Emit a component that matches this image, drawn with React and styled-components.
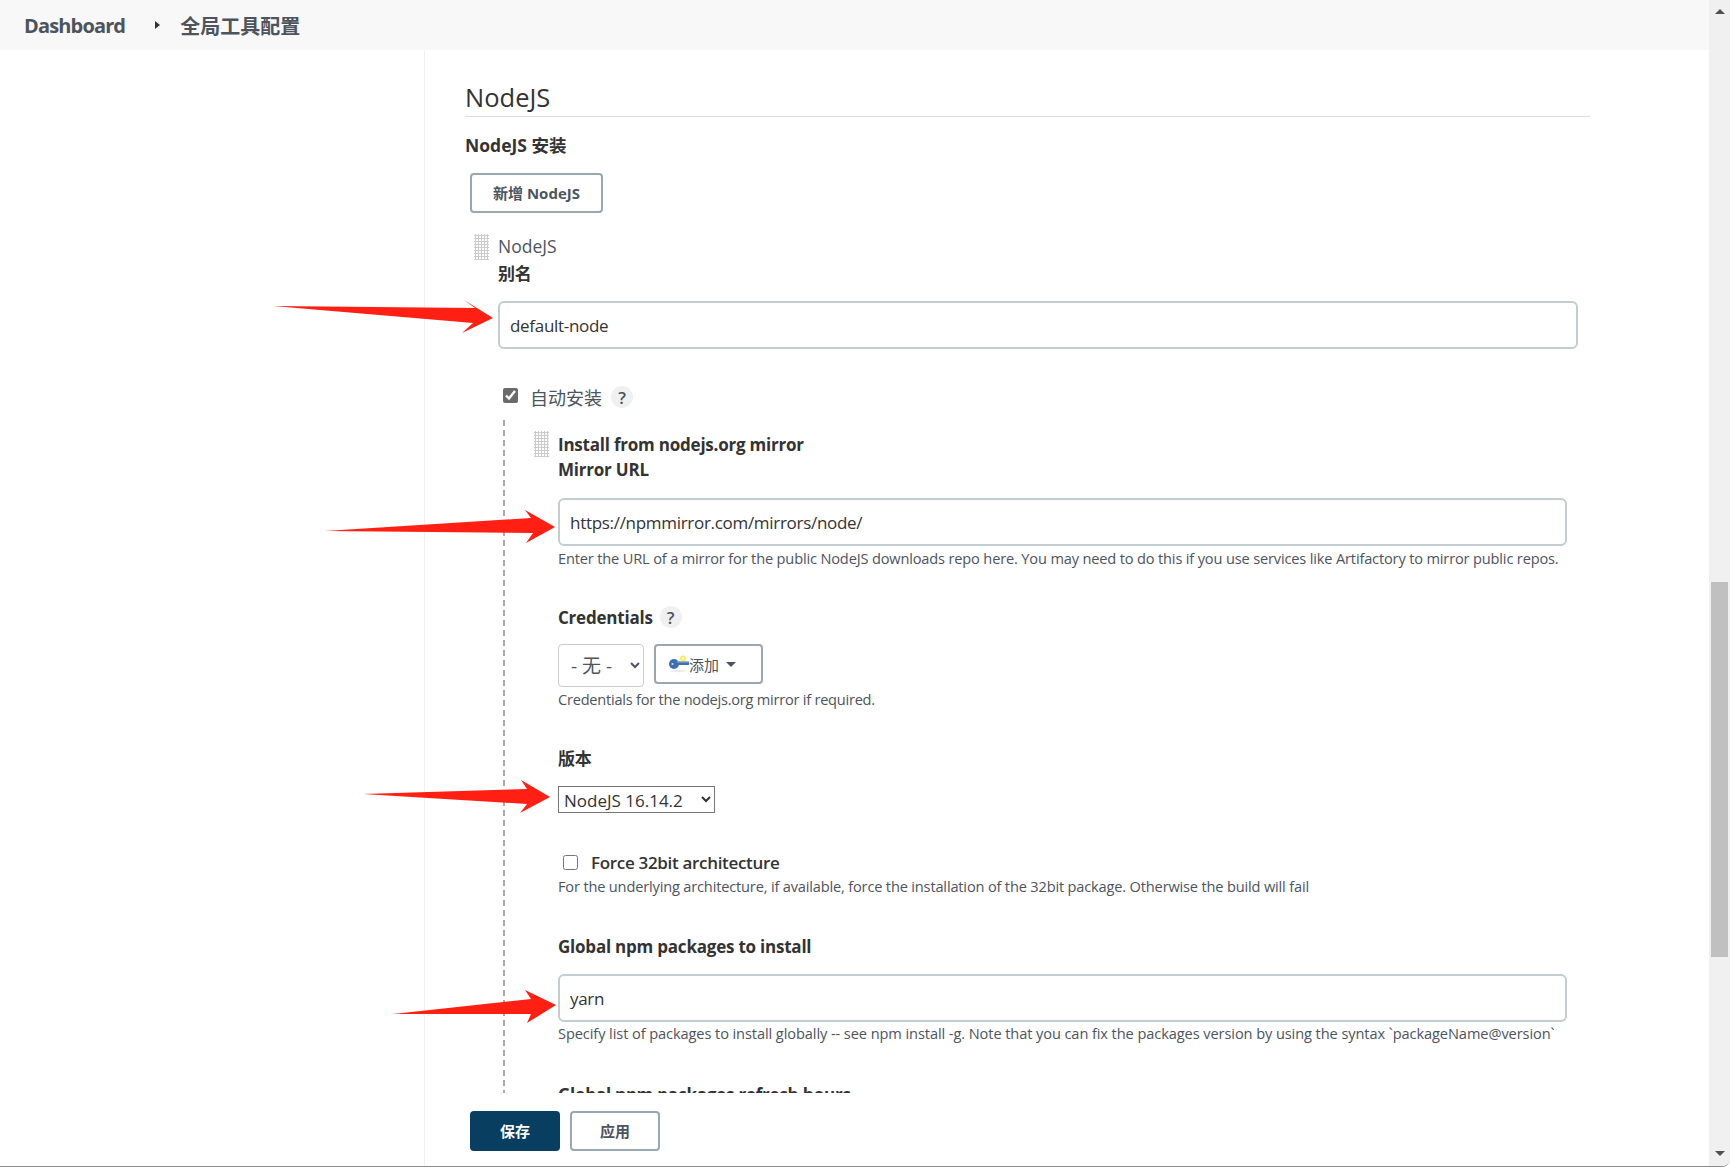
import styled, { createGlobalStyle } from "styled-components";

const GlobalStyle = createGlobalStyle`
    html, body {
        margin: 0;
        padding: 0;
        background: #fff;
    }
    body {
        font-family: "Open Sans", "Noto Sans CJK SC", sans-serif;
        color: #333;
        overflow: hidden;
    }
`

const KeyIcon = () => (
    <svg width="20" height="20" viewBox="0 0 20 20">
        <ellipse cx="9" cy="17" rx="8" ry="1.2" fill="#ececec" />
        <circle cx="14" cy="4.5" r="3" fill="#f7ee5a" />
        <circle cx="14" cy="4.5" r="1.3" fill="#fffbd0" />
        <ellipse cx="5" cy="10" rx="5" ry="5" fill="#3f6fb0" />
        <rect x="8" y="7.5" width="12" height="3.5" fill="#3f6fb0" />
        <rect x="8" y="7.5" width="12" height="1" fill="#8fb0da" />
        <circle cx="3.5" cy="10" r="1.1" fill="#c9daf0" />
    </svg>
)

const App = () => {
    return (
        <Page>
            <GlobalStyle />
            <Window>
                <Breadcrumb>
                    <Crumb $spacing={-0.85}>Dashboard</Crumb>
                    <CrumbArrow />
                    <Crumb>全局工具配置</Crumb>
                </Breadcrumb>
                <Body>
                    <Sidebar />
                    <Main>
                        <Scroller>
                            <SectionTitle>NodeJS</SectionTitle>
                            <Heading>NodeJS 安装</Heading>
                            <AddButton>新增 NodeJS</AddButton>
                            <Item>
                                <Handle />
                                <ItemBody>
                                    <ItemName>NodeJS</ItemName>
                                    <Label $top={3}>别名</Label>
                                    <TextInput $top={16} defaultValue="default-node" />
                                    <CheckRow $top={36} $left={5}>
                                        <Check type="checkbox" defaultChecked $lift={3} />
                                        <CheckText>自动安装</CheckText>
                                        <Help>?</Help>
                                    </CheckRow>
                                    <Nested>
                                        <NestedItem>
                                            <Handle />
                                            <ItemBody>
                                                <Label $top={1}>Install from nodejs.org mirror</Label>
                                                <Label $top={1}>Mirror URL</Label>
                                                <TextInput $top={17} defaultValue="https://npmmirror.com/mirrors/node/" />
                                                <Hint $top={2}>Enter the URL of a mirror for the public NodeJS downloads repo here. You may need to do this if you use services like Artifactory to mirror public repos.</Hint>

                                                <LabelRow $top={37}>
                                                    <Label>Credentials</Label>
                                                    <Help $left={7}>?</Help>
                                                </LabelRow>
                                                <CredentialRow>
                                                    <CredentialSelect defaultValue="none">
                                                        <option value="none">- 无 -</option>
                                                    </CredentialSelect>
                                                    <CredentialAdd>
                                                        <KeyIcon />
                                                        <span>添加</span>
                                                        <Caret />
                                                    </CredentialAdd>
                                                </CredentialRow>
                                                <Hint $top={2} $spacing={-0.24}>Credentials for the nodejs.org mirror if required.</Hint>

                                                <Label $top={37}>版本</Label>
                                                <VersionSelect defaultValue="16.14.2">
                                                    <option value="16.14.2">NodeJS 16.14.2</option>
                                                </VersionSelect>

                                                <CheckRow $top={37} $left={5}>
                                                    <Check type="checkbox" />
                                                    <ForceText>Force 32bit architecture</ForceText>
                                                </CheckRow>
                                                <Hint $top={2} $spacing={-0.17}>For the underlying architecture, if available, force the installation of the 32bit package. Otherwise the build will fail</Hint>

                                                <Label $top={38}>Global npm packages to install</Label>
                                                <TextInput $top={16} defaultValue="yarn" />
                                                <Hint $top={1} $spacing={-0.09}>Specify list of packages to install globally -- see npm install -g. Note that you can fix the packages version by using the syntax `packageName@version`</Hint>

                                                <Label $top={39}>Global npm packages refresh hours</Label>
                                            </ItemBody>
                                        </NestedItem>
                                    </Nested>
                                </ItemBody>
                            </Item>
                        </Scroller>
                        <Footer>
                            <SaveButton>保存</SaveButton>
                            <ApplyButton>应用</ApplyButton>
                        </Footer>
                    </Main>
                </Body>

                {/* red annotations drawn on top of the screenshot */}
                <Arrows viewBox="0 0 1730 1167">
                    <polygon points="273,306 475,308 464,300 493,318 462,333 473,323" />
                    <polygon points="325,531 531,518 525,510 555,527 526,543 533,533" />
                    <polygon points="363,794 527,789 521,780 550,797 520,813 527,804" />
                    <polygon points="393,1014 531,999 525,990 556,1005 527,1023 531,1014" />
                </Arrows>
            </Window>
            <Scrollbar>
                <ScrollUp />
                <ScrollThumb />
                <ScrollDown />
            </Scrollbar>
        </Page>
    );
}

const Page = styled.div`
    display: flex;
    width: 1730px;
    height: 1167px;
    box-sizing: border-box;
    border-bottom: 1px solid #8c8c8c;
    border-bottom-right-radius: 8px;
    overflow: hidden;
`

const Window = styled.div`
    position: relative;
    display: flex;
    flex-direction: column;
    flex: 1;
    min-width: 0;
`

const Breadcrumb = styled.nav`
    display: flex;
    align-items: center;
    flex: none;
    height: 50px;
    padding-left: 24px;
    background: #f8f8f8;
`

const Crumb = styled.span`
    font-size: 20px;
    font-weight: 700;
    letter-spacing: ${props => props.$spacing || 0}px;
    color: #4d545d;
`

const CrumbArrow = styled.span`
    width: 0;
    height: 0;
    margin: 0 20px 0 30px;
    border-left: 5px solid #333;
    border-top: 4.5px solid transparent;
    border-bottom: 4.5px solid transparent;
`

const Body = styled.div`
    display: flex;
    flex: 1;
    min-height: 0;
`

const Sidebar = styled.aside`
    flex: none;
    width: 424px;
    border-right: 1px solid #f0f0f0;
`

const Main = styled.main`
    display: flex;
    flex-direction: column;
    flex: 1;
    min-width: 0;
    padding: 0 119px 0 40px;
`

const Scroller = styled.div`
    flex: 1;
    min-height: 0;
    overflow: hidden;
`

const SectionTitle = styled.h2`
    box-sizing: border-box;
    height: 35px;
    margin: 32px 0 0;
    border-bottom: 1px solid #ddd;
    font-size: 25.5px;
    font-weight: 400;
    line-height: 30px;
    color: #333;
`

const Heading = styled.div`
    margin-top: 16px;
    font-size: 17.5px;
    font-weight: 700;
    line-height: 24px;
`

const AddButton = styled.button`
    display: block;
    box-sizing: border-box;
    width: 133px;
    height: 40px;
    margin: 16px 0 0 5px;
    padding: 0 0 2px;
    border: 2px solid #9aa6b0;
    border-radius: 4px;
    background: #fff;
    font: 700 15px "Open Sans", "Noto Sans CJK SC", sans-serif;
    color: #4d545d;
`

const Item = styled.div`
    display: flex;
    gap: 9px;
    margin: 21px 12px 0 9px;
`

const NestedItem = styled.div`
    display: flex;
    gap: 9px;
`

const Handle = styled.div`
    flex: none;
    width: 15px;
    height: 26px;
    background-image: radial-gradient(circle, #ccc 1px, transparent 1.2px);
    background-size: 3px 3px;
`

const ItemBody = styled.div`
    flex: 1;
    min-width: 0;
`

const ItemName = styled.div`
    font-size: 17.5px;
    line-height: 24px;
    color: #4d545d;
`

const Label = styled.div`
    margin-top: ${props => props.$top || 0}px;
    margin-bottom: -1px;
    padding-top: 1px;
    font-size: 17px;
    font-weight: 700;
    letter-spacing: -0.22px;
    line-height: 24px;
    color: #333;
`

const LabelRow = styled.div`
    display: flex;
    align-items: center;
    margin-top: ${props => props.$top || 0}px;
`

const TextInput = styled.input`
    display: block;
    box-sizing: border-box;
    width: 100%;
    height: 48px;
    margin-top: ${props => props.$top || 0}px;
    padding: 1px 10px 0;
    border: 2px solid #c3ccd1;
    border-radius: 6px;
    outline: none;
    background: #fff;
    font: 400 17px "Open Sans", "Noto Sans CJK SC", sans-serif;
    letter-spacing: -0.3px;
    color: #333;
`

const CheckRow = styled.label`
    display: flex;
    align-items: center;
    height: 24px;
    margin: ${props => props.$top || 0}px 0 0 ${props => props.$left || 0}px;
`

const Check = styled.input`
    flex: none;
    width: 15px;
    height: 15px;
    margin: 0 13px ${props => props.$lift || 0}px 0;
    accent-color: #6b6b6b;
`

const CheckText = styled.span`
    margin-left: -1px;
    font-size: 18px;
    color: #4d545d;
`

const ForceText = styled.span`
    font-size: 17px;
    font-weight: 600;
    letter-spacing: -0.32px;
    color: #333;
`

const Help = styled.span`
    display: inline-flex;
    align-items: center;
    justify-content: center;
    flex: none;
    width: 22px;
    height: 22px;
    margin-left: ${props => props.$left ?? 9}px;
    border-radius: 50%;
    background: #f0f0f0;
    font-size: 17px;
    font-weight: 600;
    color: #4d545d;
`

const Nested = styled.div`
    margin: 11px 11px 0 5px;
    padding: 11px 0 100px 29px;
    border-left: 2px dashed #aaa;
`

const Hint = styled.div`
    margin-top: ${props => props.$top || 0}px;
    font-size: 14.6px;
    letter-spacing: ${props => props.$spacing ?? -0.16}px;
    line-height: 20px;
    white-space: nowrap;
    color: #4d545d;
`

const CredentialRow = styled.div`
    display: flex;
    align-items: flex-start;
    gap: 10px;
    margin-top: 15px;
`

const CredentialSelect = styled.select`
    box-sizing: border-box;
    width: 86px;
    height: 43px;
    padding: 0 8px;
    border: 1px solid #ccc;
    border-radius: 4px;
    background: #fff;
    font: 400 19px "Open Sans", "Noto Sans CJK SC", sans-serif;
    color: #4d545d;
`

const CredentialAdd = styled.button`
    display: flex;
    align-items: center;
    box-sizing: border-box;
    width: 109px;
    height: 40px;
    padding: 0 0 0 13px;
    border: 2px solid #9aa6b0;
    border-radius: 4px;
    background: #fff;
    font: 400 15px "Open Sans", "Noto Sans CJK SC", sans-serif;
    color: #4d545d;
`

const Caret = styled.span`
    width: 0;
    height: 0;
    margin-left: 7px;
    border-top: 5px solid #4d545d;
    border-left: 5px solid transparent;
    border-right: 5px solid transparent;
`

const VersionSelect = styled.select`
    display: block;
    box-sizing: border-box;
    width: 157px;
    height: 27px;
    margin-top: 16px;
    padding: 1px 2px 0 1px;
    border: 1px solid #767676;
    border-radius: 0;
    background: #fff;
    font: 400 17px "Open Sans", "Noto Sans CJK SC", sans-serif;
    color: #333;
`

const Footer = styled.div`
    display: flex;
    flex: none;
    gap: 10px;
    height: 73px;
    box-sizing: border-box;
    padding: 18px 0 0 5px;
`

const SaveButton = styled.button`
    box-sizing: border-box;
    width: 90px;
    height: 40px;
    padding: 0 0 2px;
    border: 0;
    border-radius: 4px;
    background: #083e5f;
    font: 700 15px "Open Sans", "Noto Sans CJK SC", sans-serif;
    color: #fff;
`

const ApplyButton = styled.button`
    box-sizing: border-box;
    width: 90px;
    height: 40px;
    padding: 0 0 1px;
    border: 2px solid #9aa6b0;
    border-radius: 4px;
    background: #fff;
    font: 700 15px "Open Sans", "Noto Sans CJK SC", sans-serif;
    color: #4d545d;
`

const Arrows = styled.svg`
    position: absolute;
    top: 0;
    left: 0;
    width: 1730px;
    height: 1167px;
    fill: #ff2013;
    pointer-events: none;
`

const Scrollbar = styled.div`
    display: flex;
    flex-direction: column;
    align-items: center;
    flex: none;
    width: 21px;
    background: #f0f0f0;
`

const ScrollUp = styled.span`
    width: 0;
    height: 0;
    margin-top: 9px;
    border-bottom: 5px solid #505050;
    border-left: 5px solid transparent;
    border-right: 5px solid transparent;
`

const ScrollThumb = styled.div`
    width: 17px;
    height: 375px;
    margin-top: 568px;
    background: #c0c0c0;
`

const ScrollDown = styled.span`
    width: 0;
    height: 0;
    margin-top: 194px;
    border-top: 5px solid #505050;
    border-left: 5px solid transparent;
    border-right: 5px solid transparent;
`

export default App
